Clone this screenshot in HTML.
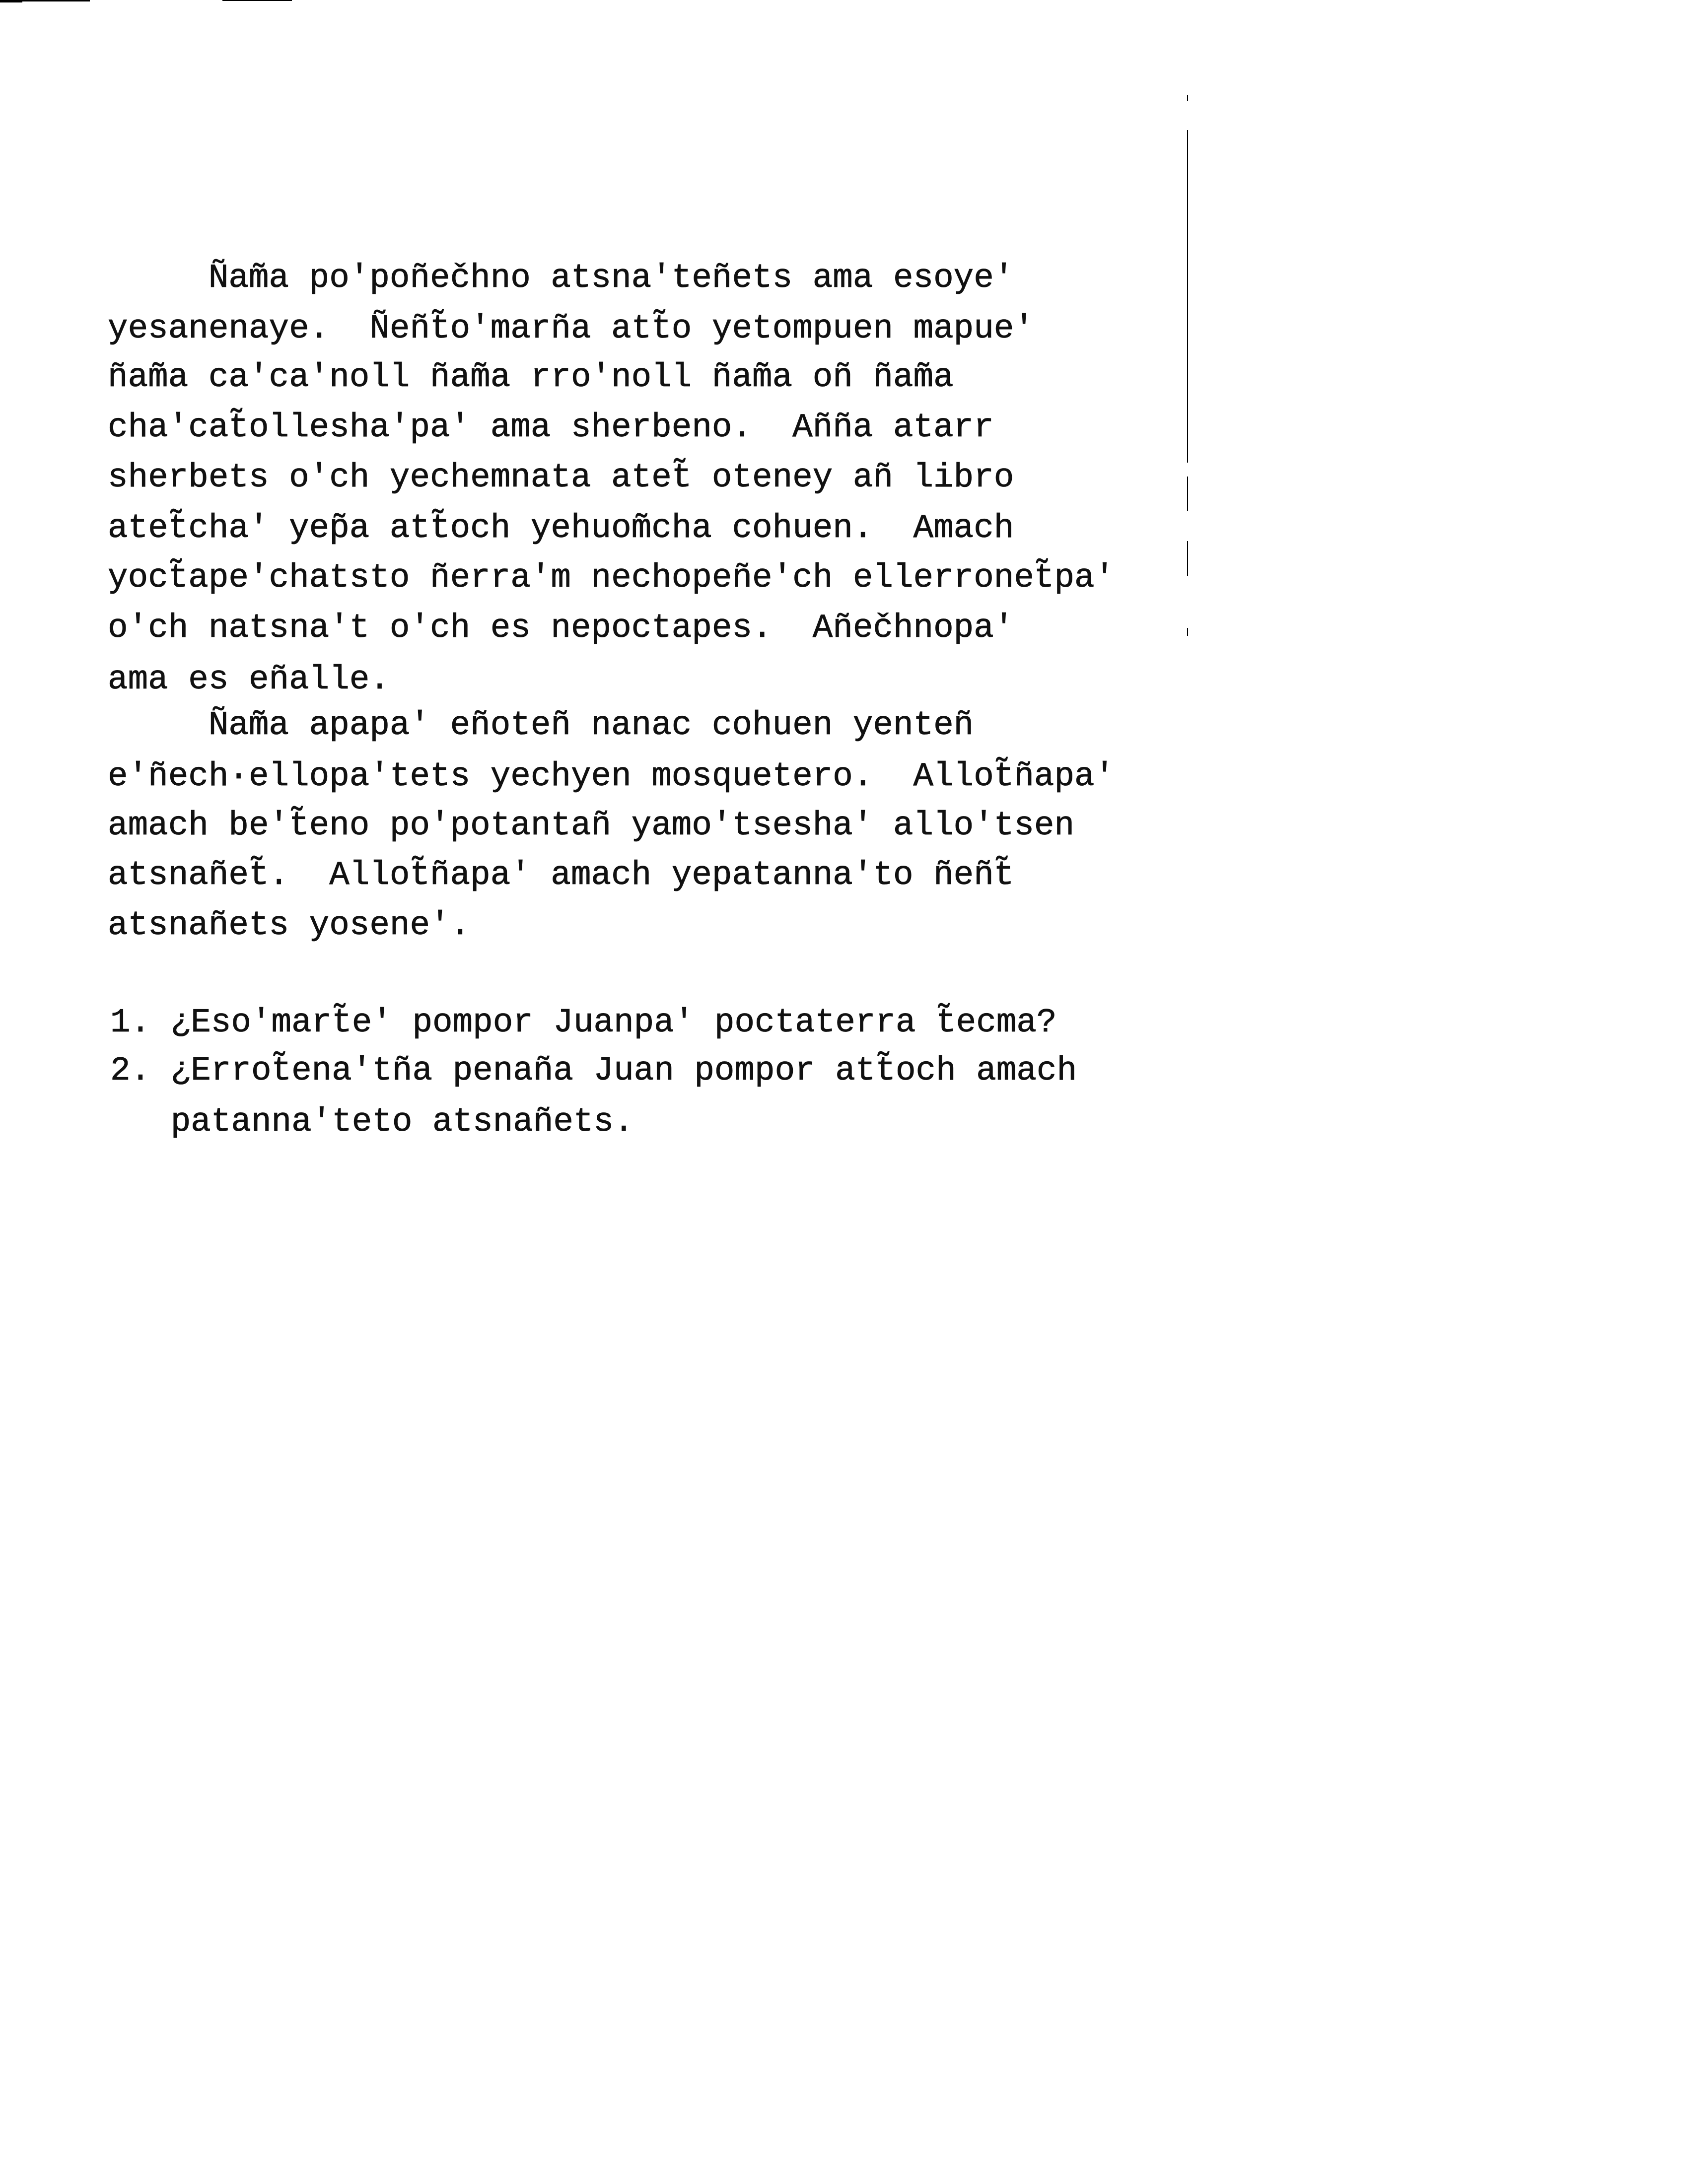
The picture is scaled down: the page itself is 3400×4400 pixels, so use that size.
<!DOCTYPE html>
<html><head><meta charset="utf-8"><style>
html,body{margin:0;padding:0;background:#fff;}
body{width:3400px;height:4400px;position:relative;overflow:hidden;}
.l{position:absolute;white-space:pre;font-family:"Liberation Mono","DejaVu Sans Mono",monospace;font-size:67.6px;line-height:100px;color:#111;height:100px;-webkit-text-stroke:0.8px #111;}
.m{position:absolute;background:#000;}
</style></head><body>
<div class="m" style="left:0;top:0;width:181px;height:3px"></div>
<div class="m" style="left:0;top:0;width:45px;height:5px"></div>
<div class="m" style="left:448px;top:0;width:140px;height:2px"></div>
<div class="m" style="left:2391px;top:191px;width:2px;height:12px"></div>
<div class="m" style="left:2391px;top:262px;width:2px;height:670px"></div>
<div class="m" style="left:2391px;top:960px;width:2px;height:70px"></div>
<div class="m" style="left:2391px;top:1090px;width:2px;height:70px"></div>
<div class="m" style="left:2391px;top:1265px;width:2px;height:16px"></div>

<div class="l" style="left:217px;top:511px">     Ñam̃a po'poñečhno atsna'teñets ama esoye'</div>
<div class="l" style="left:217px;top:613px">yesanenaye.  Ñeñt̃o'marña att̃o yetompuen mapue'</div>
<div class="l" style="left:217px;top:711px">ñam̃a ca'ca'noll ñam̃a rro'noll ñam̃a oñ ñam̃a</div>
<div class="l" style="left:217px;top:812px">cha'cat̃ollesha'pa' ama sherbeno.  Añña atarr</div>
<div class="l" style="left:217px;top:913px">sherbets o'ch yechemnata atet̃ oteney añ libro</div>
<div class="l" style="left:217px;top:1015px">atet̃cha' yep̃a att̃och yehuom̃cha cohuen.  Amach</div>
<div class="l" style="left:217px;top:1115px">yoct̃ape'chatsto ñerra'm nechopeñe'ch ellerronet̃pa'</div>
<div class="l" style="left:217px;top:1216px">o'ch natsna't o'ch es nepoctapes.  Añečhnopa'</div>
<div class="l" style="left:217px;top:1320px">ama es eñalle.</div>

<div class="l" style="left:217px;top:1412px">     Ñam̃a apapa' eñoteñ nanac cohuen yenteñ</div>
<div class="l" style="left:217px;top:1515px">e'ñech·ellopa'tets yechyen mosquetero.  Allot̃ñapa'</div>
<div class="l" style="left:217px;top:1614px">amach be't̃eno po'potantañ yamo'tsesha' allo'tsen</div>
<div class="l" style="left:217px;top:1714px">atsnañet̃.  Allot̃ñapa' amach yepatanna'to ñeñt̃</div>
<div class="l" style="left:217px;top:1815px">atsnañets yosene'.</div>

<div class="l" style="left:222px;top:2011px">1. ¿Eso'mart̃e' pompor Juanpa' poctaterra t̃ecma?</div>
<div class="l" style="left:222px;top:2108px">2. ¿Errot̃ena'tña penaña Juan pompor att̃och amach</div>
<div class="l" style="left:222px;top:2211px">   patanna'teto atsnañets.</div>
</body></html>
